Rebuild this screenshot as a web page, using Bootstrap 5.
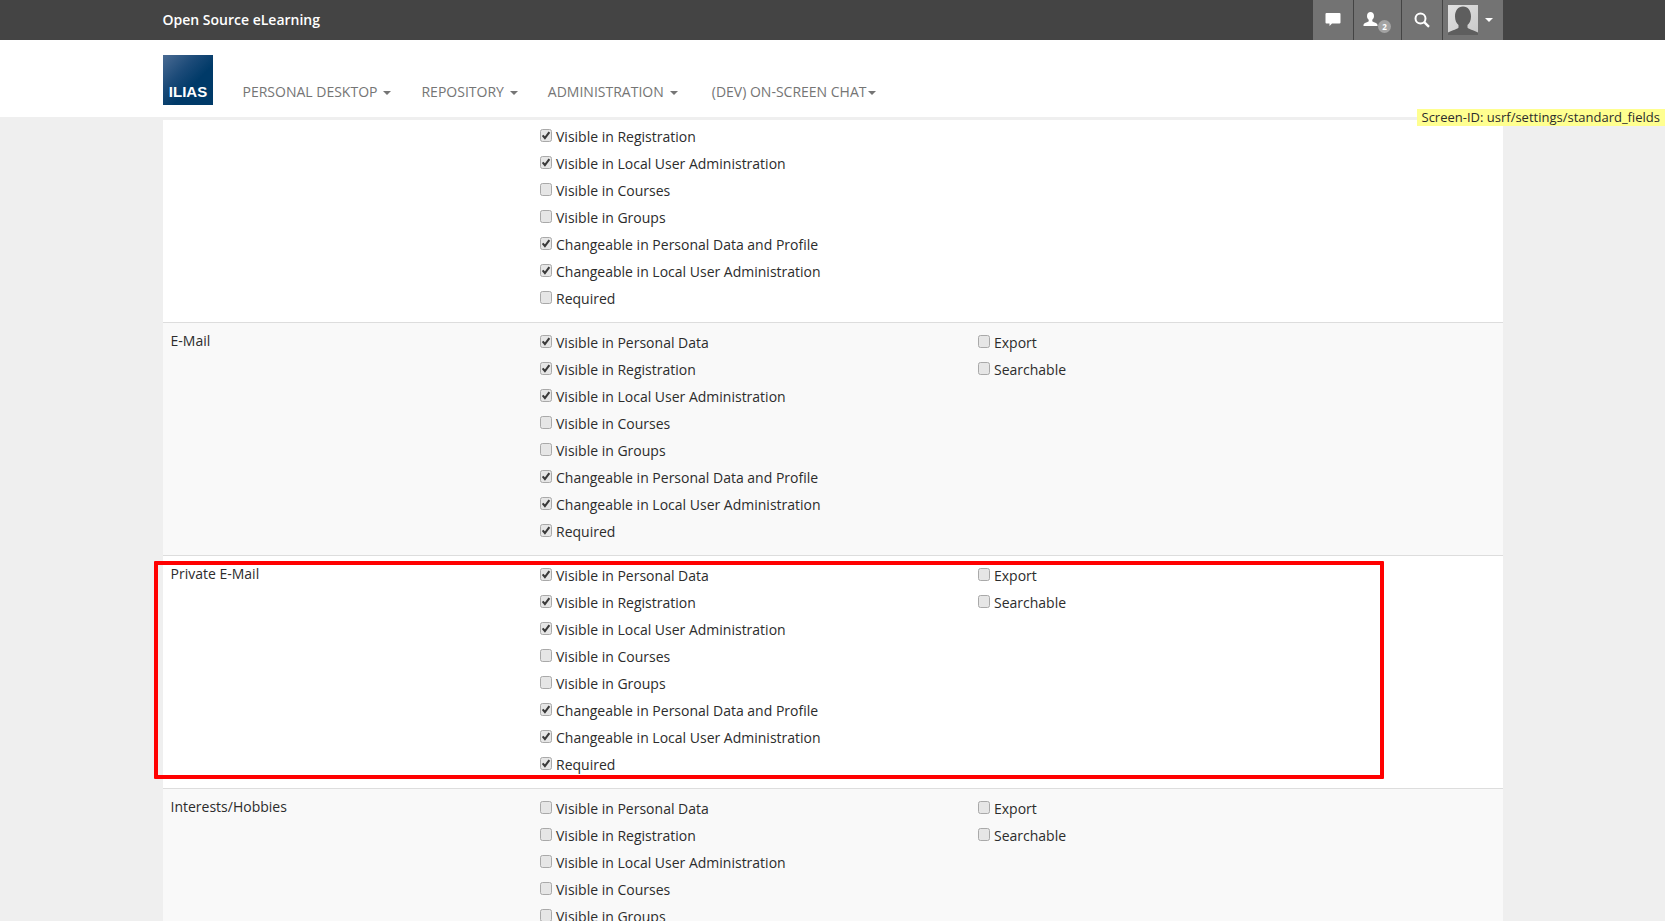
<!DOCTYPE html>
<html lang="en"><head><meta charset="utf-8"><title>ILIAS</title>
<link href="https://cdn.jsdelivr.net/npm/bootstrap@5.3.0/dist/css/bootstrap.min.css" rel="stylesheet">
<style>
html,body{height:921px;overflow:hidden}
body{background:#efefef;font-family:"Open Sans",sans-serif;font-size:14px;color:#222;line-height:20px}
.wrap-x{width:1340px;margin-left:163px}
.top-strip{background:#444;height:40px}
.top-strip .wrap-x{height:40px}
.brand-name{color:#fff;font-weight:600;font-size:14px;margin-left:-.5px}
.tool-btn{background:#737373;height:40px;position:relative;flex:none}
.tool-btn svg{position:absolute}
.tool-btn+.tool-btn{margin-left:1px}
.w40{width:40px}.w47{width:47px}.w60{width:60px}
.main-head{background:#fff;height:77px}
.main-head .wrap-x{height:77px;position:relative}
.logo-box{width:50px;height:50px;margin-top:15px;background:linear-gradient(135deg,#4a6b93 0,#1b4a78 35%,#003a68 60%,#003a68 100%);color:#fff;font-family:"Liberation Sans",sans-serif;font-weight:700;font-size:15px;line-height:18px;text-align:center;padding-top:28px}
.main-nav{padding-bottom:15px}
.menu-link{color:#757575;text-transform:uppercase;font-size:14px;text-decoration:none;display:inline-flex;align-items:center;margin-left:30px}
.menu-link:first-child{margin-left:29.5px}
.menu-link.last-link{margin-left:34px}
.menu-caret{display:inline-block;border-left:4px solid transparent;border-right:4px solid transparent;border-top:4px solid #757575;margin-left:6px;margin-top:2px}
.last-link .menu-caret{margin-left:2px}
.caret-w{position:absolute;left:42px;top:18px;margin:0;border-top-color:#fff}
.badge-dot{position:absolute;left:24px;top:20px;width:13px;height:13px;border-radius:50%;background:#a3a3a3;color:#fff;font-size:8px;line-height:13px;text-align:center;font-weight:700}
.stripe-sep{height:3px;background:#efefef}
.sheet-area{background:#fff;position:relative}
.set-row{display:flex;border-bottom:1px solid #ddd;background:#fff;padding:6px 0 10px}
.set-row.shade{background:#f9f9f9}
.set-row.first-one{padding:3px 0 10px}
.set-label{width:376px;padding:0 0 0 7.5px;color:#2c2c2c;position:relative;top:2px}
.set-col1{width:438px}
.set-col2{flex:1}
.chk-line{height:27px;display:flex;align-items:center;color:#2c2c2c;white-space:nowrap}
.chk-box{appearance:none;-webkit-appearance:none;width:12px;height:13px;margin:-3px 4px 0 1px;border:1px solid #a9a9a9;border-radius:2.5px;background:#e6e6e6 center/10px 11px no-repeat;display:block;flex:none}
.chk-box:checked{background-image:url("data:image/svg+xml,%3Csvg xmlns='http://www.w3.org/2000/svg' viewBox='0 0 11 11'%3E%3Cpath d='M1.800 5.400 4.300 8.300 9.200 1.800' fill='none' stroke='%233a3a3a' stroke-width='2.300'/%3E%3C/svg%3E")}
.screen-id{position:absolute;right:0;top:109px;background:#ffff90;color:#2c2c2c;font-size:13px;line-height:17px;padding:0 5px;white-space:nowrap;z-index:5}
.mark-frame{position:absolute;left:154px;top:561px;width:1230px;height:218px;border:4px solid #f00;border-radius:1px;z-index:4;pointer-events:none}
.page-clip{height:921px;overflow:hidden;position:relative}
</style></head>
<body>
<div class="page-clip">
<div class="top-strip"><div class="wrap-x d-flex align-items-center justify-content-between">
<span class="brand-name">Open Source eLearning</span>
<div class="d-flex">
<div class="tool-btn w40"><svg style="left:12px;top:12px" width="16" height="15" viewBox="0 0 16 15"><path d="M1.500 1h13a1 1 0 0 1 1 1v8.500a1 1 0 0 1-1 1H7L4.500 14v-2.500h-3a1 1 0 0 1-1-1V2a1 1 0 0 1 1-1z" fill="#fff"/></svg></div>
<div class="tool-btn w47"><svg style="left:9px;top:11px" width="15" height="16" viewBox="0 0 15 16"><path d="M7.500 1C9.500 1 11 2.600 11 5c0 1.700-.7 3-1.700 3.800v1.400c0 .9 5.200 1.300 5.200 3.800v1H.5v-1c0-2.500 5.200-2.900 5.200-3.800V8.800C4.700 8 4 6.700 4 5 4 2.600 5.500 1 7.500 1z" fill="#fff"/></svg><span class="badge-dot">2</span></div>
<div class="tool-btn w40"><svg style="left:12px;top:12px" width="16" height="16" viewBox="0 0 16 16"><circle cx="6.500" cy="6.500" r="5" fill="none" stroke="#fff" stroke-width="2"/><path d="M10.200 10.200 15 14.800" stroke="#fff" stroke-width="2.400"/></svg></div>
<div class="tool-btn w60"><svg style="left:5px;top:5px" width="30" height="30" viewBox="0 0 30 30"><defs><linearGradient id="gb" x1="0" y1="0" x2="1" y2="1"><stop offset="0" stop-color="#e2e2e2"/><stop offset="1" stop-color="#c8c8c8"/></linearGradient></defs><rect width="30" height="30" fill="url(#gb)"/><path d="M15 1.500c5 0 8 4 8 10 0 4-1.500 7-3.500 8.500v2.500c0 1.500 6.500 2.500 10.500 5V30H0v-2.500c4-2.500 10.500-3.500 10.500-5V20C8.500 18.500 7 15.500 7 11.500 7 5.500 10 1.500 15 1.500z" fill="#5e5e5e"/></svg><span class="menu-caret caret-w"></span></div>
</div></div></div>
<div class="main-head"><div class="wrap-x d-flex">
<div class="logo-box">ILIAS</div>
<nav class="d-flex align-items-end main-nav">
<a class="menu-link" href="#">Personal Desktop<span class="menu-caret"></span></a>
<a class="menu-link" href="#">Repository<span class="menu-caret"></span></a>
<a class="menu-link" href="#">Administration<span class="menu-caret"></span></a>
<a class="menu-link last-link" href="#">(Dev) On-Screen Chat<span class="menu-caret"></span></a>
</nav></div></div>
<div class="stripe-sep"></div>
<div class="screen-id">Screen-ID: usrf/settings/standard_fields</div>
<div class="mark-frame"></div>
<div class="wrap-x sheet-area" id="sheet"></div>
</div>
<script>
var full=["Visible in Personal Data","Visible in Registration","Visible in Local User Administration","Visible in Courses","Visible in Groups","Changeable in Personal Data and Profile","Changeable in Local User Administration","Required"];
var rows=[
 {label:"",shade:false,first:true,items:full.slice(1),on:[1,1,0,0,1,1,0],side:null},
 {label:"E-Mail",shade:true,items:full,on:[1,1,1,0,0,1,1,1],side:[0,0]},
 {label:"Private E-Mail",shade:false,items:full,on:[1,1,1,0,0,1,1,1],side:[0,0]},
 {label:"Interests/Hobbies",shade:true,items:full,on:[0,0,0,0,0,0,0,0],side:[0,0]}
];
function line(t,c){return '<label class="chk-line"><input type="checkbox" class="chk-box"'+(c?' checked':'')+'>'+t+'</label>';}
document.getElementById('sheet').innerHTML=rows.map(function(r){
 var a=r.items.map(function(t,i){return line(t,r.on[i]);}).join('');
 var b=r.side?line('Export',r.side[0])+line('Searchable',r.side[1]):'';
 return '<div class="set-row'+(r.shade?' shade':'')+(r.first?' first-one':'')+'"><div class="set-label">'+r.label+'</div><div class="set-col1">'+a+'</div><div class="set-col2">'+b+'</div></div>';
}).join('');
</script>
<script src="https://cdn.jsdelivr.net/npm/bootstrap@5.3.0/dist/js/bootstrap.bundle.min.js"></script>
</body></html>
